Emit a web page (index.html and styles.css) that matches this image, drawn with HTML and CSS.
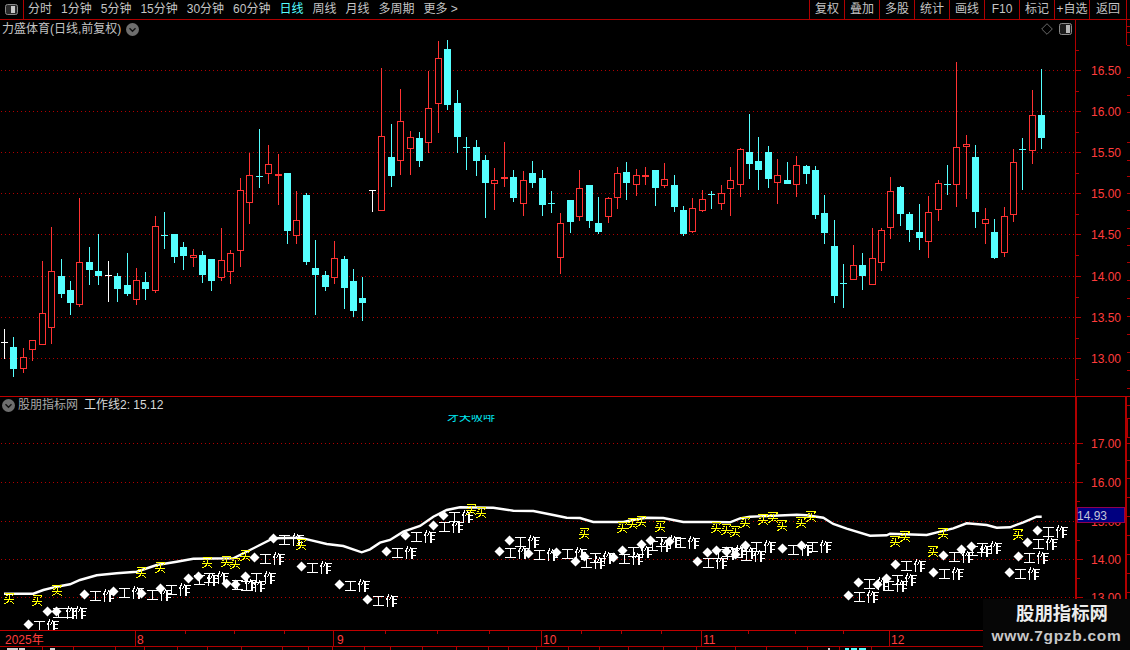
FILE: index.html
```html
<!DOCTYPE html>
<html lang="zh-CN">
<head>
<meta charset="utf-8">
<title>力盛体育 日线</title>
<link rel="stylesheet" href="styles.css">
</head>
<body>
<svg class="defs" width="0" height="0" aria-hidden="true">
  <filter id="crisp" x="-5%" y="-5%" width="110%" height="110%" color-interpolation-filters="sRGB">
    <feComponentTransfer><feFuncA type="discrete" tableValues="0 0 1 1"/></feComponentTransfer>
  </filter>
</svg>
<div class="app">
  <header class="toolbar">
    <div class="panel-btn">
      <svg class="icon" width="13" height="11" viewBox="0 0 13 11"><rect x=".5" y=".5" width="12" height="10" rx="2" fill="#2a2a2a" stroke="#8a8a8a"/><rect x="6" y="2" width="4" height="7" fill="#c8c8c8"/></svg>
    </div>
    <nav class="periods">
      <span>分时</span><span>1分钟</span><span>5分钟</span><span>15分钟</span><span>30分钟</span><span>60分钟</span>
      <span class="active">日线</span><span>周线</span><span>月线</span><span>多周期</span><span>更多&nbsp;&gt;</span>
    </nav>
    <nav class="actions">
      <span>复权</span><span>叠加</span><span>多股</span><span>统计</span><span>画线</span><span>F10</span><span>标记</span><span>+自选</span><span class="last">返回</span>
    </nav>
  </header>

  <section class="pane pane-top">
    <svg id="price" width="1130" height="376" viewBox="0 20 1130 376"></svg>
    <div class="legend legend-top">
      <span>力盛体育(日线,前复权)</span>
      <svg class="chev" width="13" height="13" viewBox="0 0 13 13"><circle cx="6.5" cy="6.5" r="6.5" fill="#6e6e6e"/><path d="M3.5 5.2 6.5 8.2 9.5 5.2" fill="none" stroke="#111" stroke-width="1.4"/></svg>
    </div>
    <div class="pane-tools">
      <svg width="12" height="12" viewBox="0 0 12 12"><path d="M6 .7 11.3 6 6 11.3.7 6Z" fill="none" stroke="#6a6a6a"/></svg>
      <svg width="13" height="12" viewBox="0 0 13 12"><rect x=".5" y=".5" width="12" height="11" rx="2" fill="#1c1c1c" stroke="#8a8a8a"/><rect x="7" y="2" width="4" height="8" fill="#b8b8b8"/></svg>
    </div>
  </section>

  <section class="pane pane-bottom">
    <svg id="indicator" width="1130" height="233" viewBox="0 397 1130 233"></svg>
    <div class="legend legend-bottom">
      <svg class="chev" width="13" height="13" viewBox="0 0 13 13"><circle cx="6.5" cy="6.5" r="6.5" fill="#6e6e6e"/><path d="M3.5 5.2 6.5 8.2 9.5 5.2" fill="none" stroke="#111" stroke-width="1.4"/></svg>
      <span class="name">股朋指标网</span>
      <span class="value">工作线2: 15.12</span>
    </div>
  </section>

  <section class="date-axis">
    <svg id="dates" width="1130" height="16" viewBox="0 630 1130 16"></svg>
  </section>
  <footer class="tabs">
    <svg id="tabs" width="1130" height="3" viewBox="0 647 1130 3"></svg>
  </footer>

  <aside class="watermark">
    <strong>股朋指标网</strong>
    <span>www.7gpzb.com</span>
  </aside>
</div>
<script src="script.js"></script>
</body>
</html>
```
FILE: styles.css
```css
* { box-sizing: border-box; }
html, body { margin: 0; background: #000; }
body { font-family: "Liberation Sans", "Noto Sans CJK SC", sans-serif; font-size: 12px; color: #c4c4c4; }
.defs { position: absolute; }

.app { position: relative; width: 1130px; height: 650px; overflow: hidden; background: #000; display: flex; flex-direction: column; }

.toolbar { flex: none; height: 20px; display: flex; border-bottom: 1px solid #b00000; }
.panel-btn { width: 24px; display: flex; align-items: center; justify-content: center; border-right: 1px solid #b00000; padding-right: 1px; }
.periods { display: flex; align-items: center; gap: 9px; padding-left: 4px; line-height: 19px; white-space: nowrap; }
.periods .active { color: #55ffff; }
.actions { margin-left: auto; display: flex; margin-right: 3px; }
.actions span { width: 35px; text-align: center; line-height: 19px; border-left: 1px solid #b00000; }
.actions .last { width: 38px; border-right: 1px solid #b00000; }

.pane { position: relative; flex: none; }
.pane svg { display: block; }
.pane-top { height: 377px; border-bottom: 1px solid #c00000; }
.pane-bottom { height: 234px; border-bottom: 1px solid #c00000; }

.legend { position: absolute; display: flex; align-items: center; line-height: 16px; white-space: nowrap; }
.legend-top { left: 2px; top: 1px; gap: 5px; }
.legend-bottom { left: 2px; top: 0; }
.legend-bottom .chev { margin-right: 3px; }
.legend-bottom .name { color: #a8a8a8; margin-right: 6px; }
.legend-bottom .value { color: #d8d8d8; }
.pane-tools { position: absolute; right: 58px; top: 3px; display: flex; align-items: center; gap: 6px; }
.pane-tools svg { display: block; }

.date-axis { flex: none; height: 16px; border-bottom: 1px solid #b00000; }
.date-axis svg { display: block; }
.tabs { flex: none; height: 3px; overflow: hidden; }
.tabs svg { display: block; }

.watermark { position: absolute; right: 0; bottom: 0; width: 147px; height: 51px; background: #060606; display: flex; flex-direction: column; align-items: center; padding-top: 2px; }
.watermark strong { font-size: 18.4px; line-height: 26px; color: #ececec; margin-left: 11px; }
.watermark span { font-size: 15.5px; font-weight: 700; line-height: 18px; letter-spacing: .7px; color: #c8c8c8; }

svg text { font-family: "Liberation Sans", "Noto Sans CJK SC", sans-serif; font-size: 12px; }
.axis-label { fill: #ff3c3c; }
svg text.work { fill: #fff; font-size: 13px; filter: url(#crisp); }
.buy { fill: #ffff00; filter: url(#crisp); }
.stray { fill: #00e8f0; }
```
FILE: script.js
```js
const NS = 'http://www.w3.org/2000/svg';
const RED = '#ff3232', CYAN = '#55ffff', WHITE = '#ffffff', LINE = '#b00000', DOT = '#b00000';

function add(parent, name, attrs, text) {
  const node = document.createElementNS(NS, name);
  for (const key in attrs) node.setAttribute(key, attrs[key]);
  if (text !== undefined) node.textContent = text;
  parent.appendChild(node);
  return node;
}
function hLine(p, x1, x2, y, color, extra) {
  add(p, 'rect', Object.assign({ x: x1, y: y, width: x2 - x1, height: 1, fill: color }, extra));
}
function vLine(p, x, y1, y2, color, w) {
  add(p, 'rect', { x: x, y: y1, width: w || 1, height: y2 - y1, fill: color });
}
function grid(p, y) {
  add(p, 'line', { x1: 1, x2: 1075, y1: y + .5, y2: y + .5, stroke: DOT, 'stroke-dasharray': '1 3', 'shape-rendering': 'crispEdges' });
}

/* Candles read off the chart: [x, high, bodyTop, bodyBottom, low, kind]
   r = hollow red, c = solid cyan, w/C/R = doji (white, cyan, red; bodyTop is the bar) */
const candles = [];
function load(ox, oy, rows) {
  rows.forEach(r => candles.push([Math.floor(ox + r[0] / 3), oy + r[1] / 3, oy + r[2] / 3, oy + r[3] / 3, oy + r[4] / 3, r[5]]));
}
load(0, 60, [
  [13,807,847,847,897,'w'],[40,831,861,927,950,'c'],[70,864,892,926,938,'r'],[97,841,841,869,902,'r'],
  [127,603,760,854,854,'r'],[154,501,634,803,851,'r'],[184,597,648,702,714,'c'],[211,663,690,729,765,'c'],
  [238,414,607,734,741,'r'],[268,561,606,630,675,'c'],[295,522,633,648,675,'c'],[325,603,646,646,726,'w'],
  [352,639,648,687,726,'c'],[382,579,675,702,708,'c'],[409,624,661,719,735,'r'],[436,636,666,687,720,'c'],
  [466,468,499,692,698,'r'],[493,456,526,526,567,'C'],[523,522,522,591,609,'c'],[550,546,561,588,630,'c'],
  [580,567,586,593,621,'r'],[607,573,585,645,669,'c'],[634,597,597,663,693,'c'],[664,504,601,653,663,'r'],
  [691,570,580,635,672,'r'],[721,354,391,572,621,'r'],[748,279,346,428,492,'r'],[778,207,348,348,384,'C'],
  [805,255,313,341,372,'r'],[835,282,342,342,435,'R'],[862,339,339,513,552,'c'],[889,393,481,527,552,'r'],
  [919,399,405,606,615,'c'],[946,540,624,645,765,'c'],[976,633,645,681,693,'c'],[1003,543,595,653,672,'r'],
  [1033,588,597,684,747,'c'],[1060,627,663,753,771,'c'],[1087,651,714,729,783,'c']
]);
load(360, 30, [
  [37,481,481,481,546,'w'],[64,114,319,542,542,'r'],[94,282,381,438,471,'c'],[121,177,274,392,435,'r'],
  [151,303,322,356,435,'r'],[178,306,324,393,411,'c'],[205,123,235,338,369,'r'],[235,33,85,221,309,'r'],
  [262,30,57,225,240,'c'],[292,180,219,321,369,'c'],[319,321,352,352,420,'C'],[349,330,351,393,438,'c'],
  [376,375,390,459,564,'c'],[403,414,451,461,540,'r'],[433,336,441,441,471,'R'],[460,420,441,504,516,'c'],
  [490,423,451,521,558,'r'],[517,393,429,459,474,'c'],[547,420,444,525,558,'c'],[574,483,519,519,549,'C'],
  [601,549,580,683,732,'r'],[631,510,510,576,609,'c'],[658,420,475,560,573,'r'],[688,465,465,573,594,'c'],
  [715,501,579,606,612,'c'],[745,501,505,560,579,'r'],[772,411,430,503,537,'r'],[799,396,426,459,510,'c'],
  [829,417,436,464,498,'r'],[856,411,436,436,465,'R'],[886,420,420,474,528,'c'],[913,399,448,468,474,'r'],
  [943,435,465,531,546,'c'],[970,528,540,612,618,'c'],[997,504,535,605,609,'r'],[1027,480,508,542,546,'r'],
  [1054,483,492,492,537,'C'],[1084,465,490,521,540,'r'],[1111,411,451,476,558,'r']
]);
load(720, 50, [
  [61,295,298,406,441,'r'],[88,192,306,342,387,'c'],[115,261,333,360,420,'c'],[145,288,306,387,414,'c'],
  [172,327,376,398,462,'r'],[202,336,390,402,402,'c'],[229,318,346,406,441,'r'],[259,345,348,372,402,'c'],
  [286,348,360,495,507,'c'],[313,435,489,549,582,'c'],[343,510,588,738,759,'c'],[370,642,699,699,774,'C'],
  [400,585,646,689,689,'r'],[427,609,645,678,720,'c'],[457,534,625,704,704,'r'],[484,534,541,638,663,'r'],
  [511,381,424,533,567,'r'],[541,408,411,492,528,'c'],[568,486,492,540,576,'c'],[598,462,546,564,600,'c'],
  [625,438,487,575,624,'r'],[655,390,400,479,513,'r'],[682,345,402,402,435,'C'],[709,36,292,404,471,'r'],
  [739,255,283,292,447,'r'],[766,285,321,486,534,'c'],[796,474,508,521,582,'r'],[823,507,546,624,627,'c'],
  [853,471,499,608,621,'r'],[880,297,337,494,516,'r'],[907,264,297,297,420,'C'],[937,120,196,302,342,'r'],
  [964,57,195,264,297,'c']
]);

function drawCandle(p, c) {
  const x = c[0], hi = Math.round(c[1]), top = Math.round(c[2]), bot = Math.round(c[3]), lo = Math.round(c[4]), k = c[5];
  const color = { r: RED, R: RED, c: CYAN, C: CYAN, w: WHITE }[k];
  if (k === 'r') {
    if (top > hi) vLine(p, x, hi, top, color);
    if (lo > bot) vLine(p, x, bot, lo, color);
    add(p, 'rect', { x: x - 2.5, y: top + .5, width: 6, height: Math.max(bot - top - 1, 1), fill: '#000', stroke: color, 'shape-rendering': 'crispEdges' });
  } else if (k === 'c') {
    vLine(p, x, hi, lo, color);
    add(p, 'rect', { x: x - 3, y: top, width: 7, height: bot - top, fill: color });
  } else {
    vLine(p, x, hi, lo, color);
    add(p, 'rect', { x: x - 3, y: top, width: 7, height: k === 'R' ? 2 : 1, fill: color });
  }
}

function axis(p, rows, x) {
  rows.forEach(r => {
    hLine(p, x, x + 6, r[0], LINE);
    add(p, 'text', { x: 1091, y: r[0] + 5, class: 'axis-label' }, r[1]);
  });
}
function buildPrice() {
  const p = document.getElementById('price');
  const rows = [[70,'16.50'],[111,'16.00'],[152,'15.50'],[193,'15.00'],[234,'14.50'],[276,'14.00'],[317,'13.50'],[358,'13.00']];
  rows.forEach(r => grid(p, r[0]));
  candles.forEach(c => drawCandle(p, c));
  vLine(p, 1075, 20, 396, LINE);
  axis(p, rows, 1075);
  [50,91,132,173,214,255,297,338,379].forEach(y => hLine(p, 1076, 1079, y, LINE));
  vLine(p, 1126, 20, 45, LINE);
  [26,32,45,77,95,112,142,160,176,193,210,228,245,262,280,298,316,334,352,370,388].forEach(y => hLine(p, 1127, 1130, y, LINE));
}

const curve = [];
function trace(ox, pts) { pts.forEach(a => curve.push((ox + a[0] / 3).toFixed(1) + ',' + (390 + a[1] / 3).toFixed(1))); }
trace(0, [[12,611],[100,611],[130,600],[170,590],[210,583],[240,570],[290,556],[350,550],[410,545],[470,525],[530,515],[580,506],[700,505],[750,480],[820,445],[900,443],[980,462],[1030,468],[1085,487],[1110,478]]);
trace(370, [[0,478],[30,458],[60,450],[100,425],[150,408],[190,380],[230,360],[270,352],[370,353],[430,362],[490,363],[550,375],[590,383],[630,384],[670,396],[760,396],[800,388],[830,383],[880,384],[940,396],[1020,396],[1080,397],[1110,385]]);
trace(740, [[30,380],[170,374],[200,376],[250,383],[280,402],[320,416],[390,437],[440,436],[450,431],[560,435],[600,425],[640,415],[680,400],[740,405],[770,413],[810,412],[850,397],[890,380],[905,380]]);

const work = [], buy = [];
function mark(list, ox, pts) { pts.forEach(a => list.push([ox + a[0] / 3, 390 + a[1] / 3])); }
mark(work, 0, [[84,701],[141,662],[168,662],[252,611],[339,604],[423,608],[481,593],[565,563],[595,557],[679,578],[706,582],[736,558],[763,500],[820,445],[904,527],[1018,581],[1102,628]]);
mark(work, 370, [[48,482],[105,434],[189,404],[219,376],[388,482],[418,449],[475,488],[559,485],[616,512],[643,497],[730,500],[757,479],[814,461],[841,449],[898,452],[982,512],[1012,485],[1039,479],[1069,482],[1096,491],[1126,464]]);
mark(work, 740, [[126,473],[183,464],[324,614],[354,575],[411,581],[438,563],[465,521],[580,545],[610,494],[663,476],[693,467],[807,545],[834,497],[861,455],[891,419]]);
mark(buy, 0, [[28,626],[112,630],[170,601],[424,548],[481,533],[622,518],[679,514],[706,519],[736,495],[904,463]]);
mark(buy, 370, [[304,357],[334,368],[643,430],[757,412],[787,400],[814,394],[871,409],[1039,412],[1069,418],[1096,424],[1126,396]]);
mark(buy, 740, [[69,388],[99,382],[126,406],[183,397],[213,379],[465,454],[495,438],[579,484],[609,430],[834,433]]);

function buildIndicator() {
  const p = document.getElementById('indicator');
  const rows = [[443,'17.00'],[482,'16.00'],[521,'15.00'],[559,'14.00'],[597,'13.00']];
  rows.forEach(r => grid(p, r[0]));

  const defs = add(p, 'defs', {});
  add(add(defs, 'clipPath', { id: 'stray-clip' }), 'rect', { x: 440, y: 415, width: 60, height: 8 });
  add(p, 'text', { x: 447, y: 421, class: 'stray', 'clip-path': 'url(#stray-clip)' }, '牙关吸啡');

  add(p, 'polyline', { points: curve.join(' '), fill: 'none', stroke: '#fff', 'stroke-width': 2.4 });
  work.forEach(m => {
    const x = Math.round(m[0]) + .5, y = Math.round(m[1]) + .5;
    add(p, 'polygon', { points: `${x - 5},${y} ${x},${y - 5} ${x + 5},${y} ${x},${y + 5}`, fill: '#fff' });
    add(p, 'text', { x: x + 4.5, y: y + 5, class: 'work' }, '工作');
  });
  buy.forEach(m => add(p, 'text', { x: m[0], y: m[1] + 4.5, class: 'buy', 'text-anchor': 'middle' }, '买'));

  vLine(p, 1075, 397, 630, LINE, 2);
  vLine(p, 1125, 397, 630, LINE, 2);
  axis(p, rows, 1077);
  [463,501,540,578].forEach(y => hLine(p, 1077, 1080, y, LINE));
  [405,418,437,443,460,478,497,516,535,554,573,592].forEach(y => hLine(p, 1127, 1130, y, LINE));
  vLine(p, 1127, 418, 437, LINE);
  add(p, 'rect', { x: 1077.5, y: 507.5, width: 47, height: 15, fill: '#000080', stroke: '#900050', 'shape-rendering': 'crispEdges' });
  add(p, 'text', { x: 1077, y: 520, fill: '#c4c4d8' }, '14.93');
}

function buildDates() {
  const p = document.getElementById('dates');
  [[5,135,'2025年',0],[137,335,'8',135],[337,541,'9',333],[543,701,'10',541],[703,889,'11',701],[891,0,'12',889]].forEach(d => {
    if (d[3]) vLine(p, d[3], 630, 646, LINE);
    add(p, 'text', { x: d[0], y: 643, class: 'axis-label' }, d[2]);
  });
  [185,234,284,385,437,489,581,621,661,748,795,843].forEach(x => vLine(p, x, 630, 633, LINE));
}

function buildTabs() {
  const p = document.getElementById('tabs');
  [42,73,115,144,177,207,241,282,308,332,364,390,422,456,488,508,536,568,599,628,663,696,735,766,807,839,871].forEach(x => vLine(p, x, 647, 650, LINE));
  [[7,6],[13,5],[19,6],[50,5],[828,2]].forEach(t => add(p, 'rect', { x: t[0], y: 648, width: t[1], height: 2, fill: '#d0d0d0' }));
  [[845,4],[851,6],[859,7]].forEach(t => add(p, 'rect', { x: t[0], y: 648, width: t[1], height: 2, fill: CYAN }));
}

buildPrice();
buildIndicator();
buildDates();
buildTabs();
```
